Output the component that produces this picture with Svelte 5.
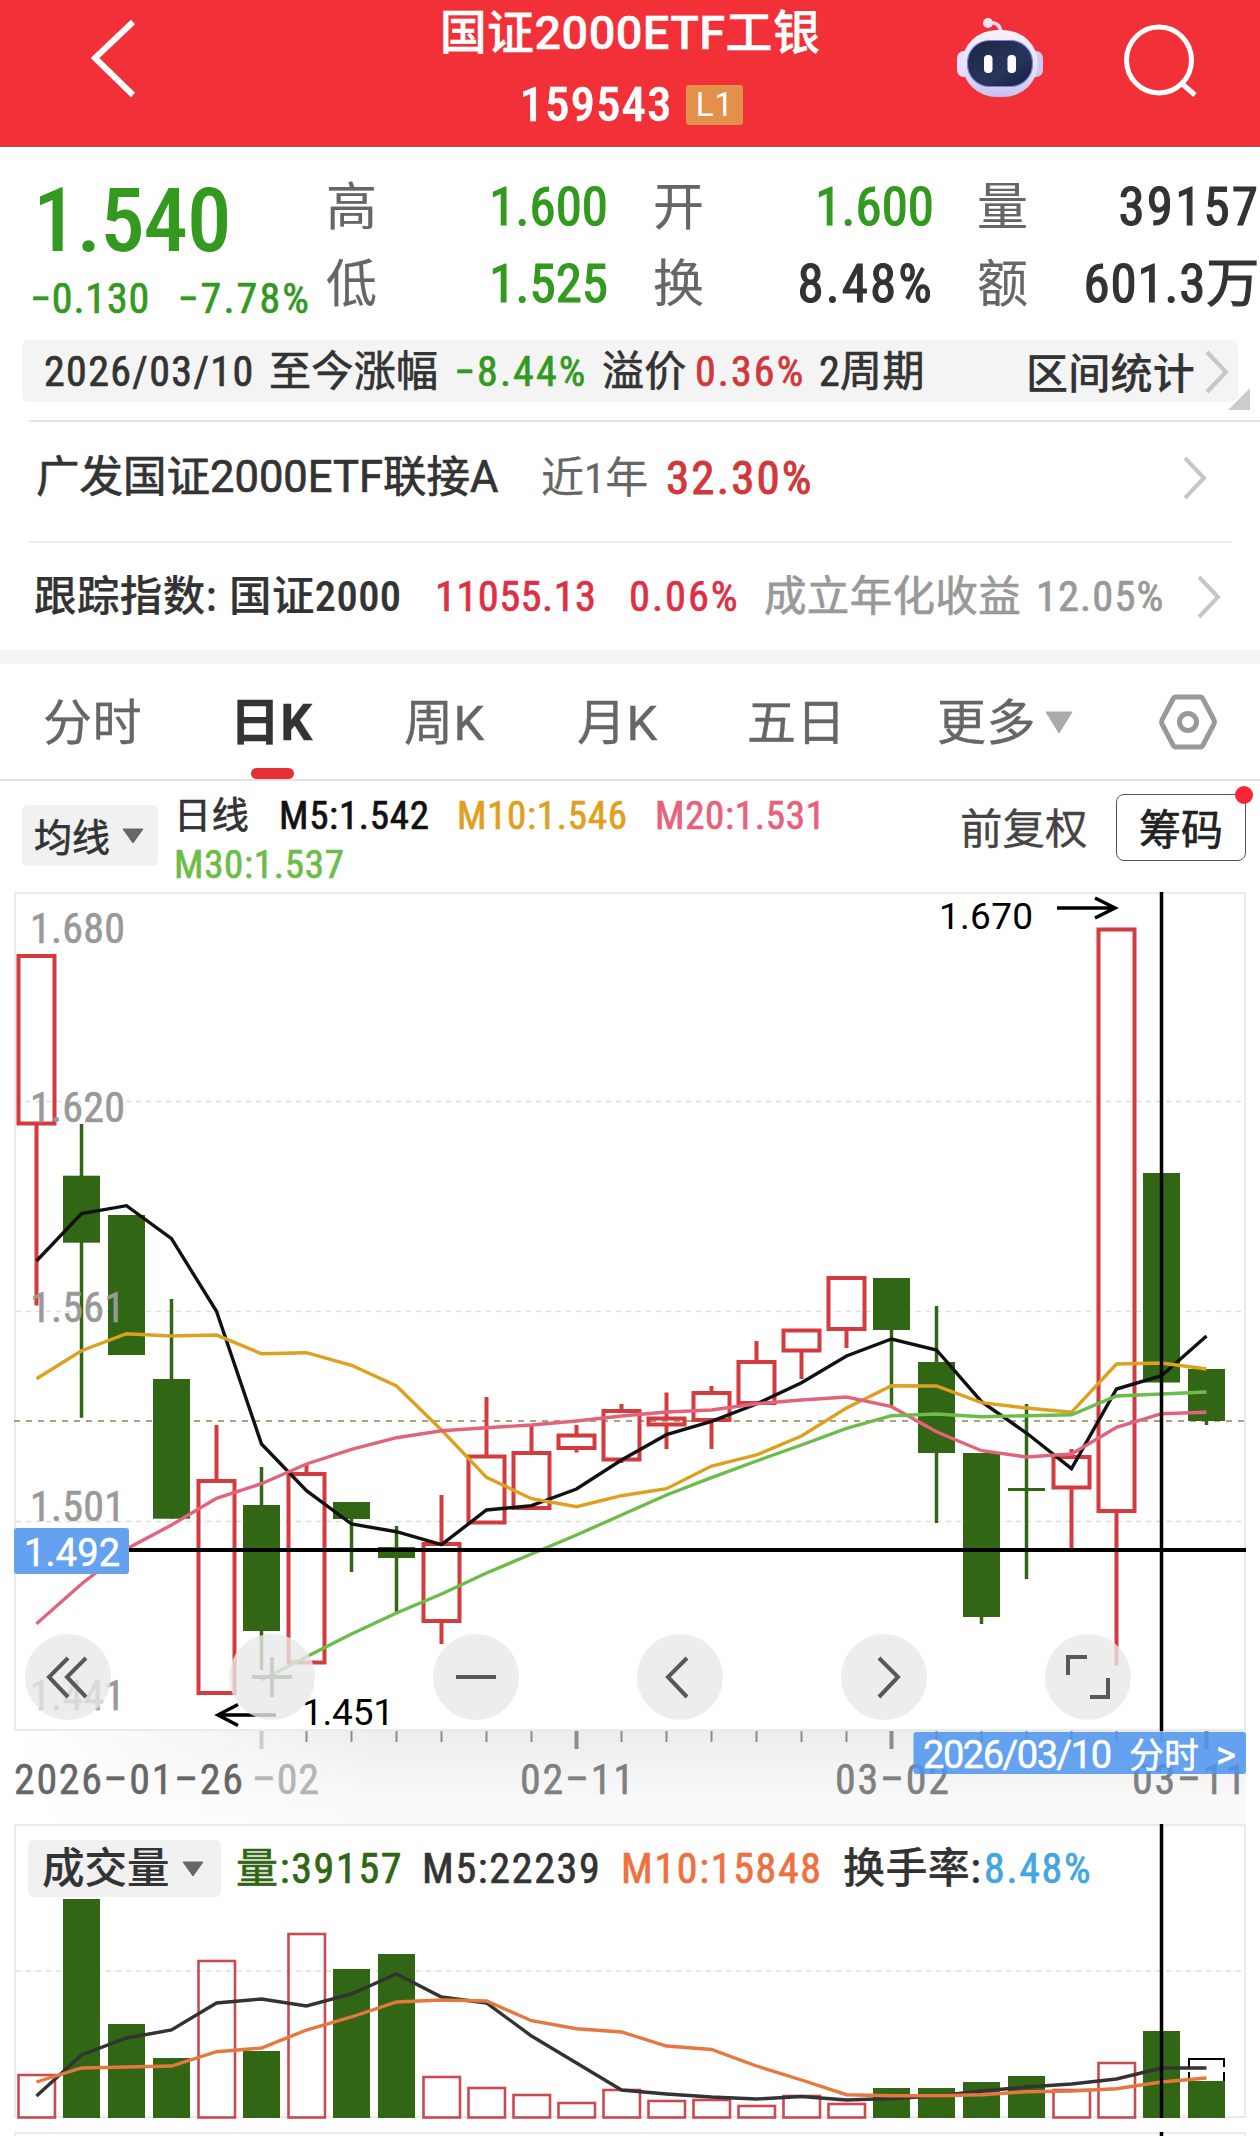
<script lang="ts">
    type Candle = { up?: boolean; high: number; top: number; bottom: number; low: number };

    const tabs = ['分时', '日K', '周K', '月K', '五日'];
    let activeTab = '日K';

    // candle geometry, in chart units (y grows downwards)
    const candles: Candle[] = [
        { up: true, high: 956, top: 956, bottom: 1123.5, low: 1305.5 },
        { high: 1124, top: 1175.7, bottom: 1242.7, low: 1417.7 },
        { high: 1215, top: 1215, bottom: 1355, low: 1355 },
        { high: 1299, top: 1379, bottom: 1518.7, low: 1518.7 },
        { up: true, high: 1425, top: 1481, bottom: 1693, low: 1693 },
        { high: 1467, top: 1505, bottom: 1631, low: 1670 },
        { up: true, high: 1465, top: 1474, bottom: 1662.5, low: 1662.5 },
        { high: 1502, top: 1502, bottom: 1519, low: 1572 },
        { high: 1526, top: 1547, bottom: 1558, low: 1612 },
        { up: true, high: 1495, top: 1544, bottom: 1621, low: 1644 },
        { up: true, high: 1397, top: 1456.5, bottom: 1522.5, low: 1522.5 },
        { up: true, high: 1424, top: 1453, bottom: 1508, low: 1508 },
        { up: true, high: 1425, top: 1435.5, bottom: 1448, low: 1452.5 },
        { up: true, high: 1404, top: 1411, bottom: 1459.5, low: 1463 },
        { up: true, high: 1392.5, top: 1418.5, bottom: 1424.5, low: 1449 },
        { up: true, high: 1386, top: 1393, bottom: 1420, low: 1449 },
        { up: true, high: 1341, top: 1362, bottom: 1403, low: 1403 },
        { up: true, high: 1330.5, top: 1330.5, bottom: 1350.5, low: 1379 },
        { up: true, high: 1278, top: 1278, bottom: 1329, low: 1348 },
        { high: 1278, top: 1278, bottom: 1330, low: 1406 },
        { high: 1306, top: 1362, bottom: 1453, low: 1523 },
        { high: 1453, top: 1453, bottom: 1617, low: 1624 },
        { high: 1404, top: 1488, bottom: 1491, low: 1579 },
        { up: true, high: 1449, top: 1457, bottom: 1487.5, low: 1548 },
        { up: true, high: 929.5, top: 929.5, bottom: 1511, low: 1665.5 },
        { high: 1173, top: 1173, bottom: 1382.5, low: 1382.5 },
        { high: 1369, top: 1369, bottom: 1421, low: 1425 }
    ];

    const m5 = [1261, 1213.7, 1205.7, 1238.7, 1311.3, 1444, 1490.7, 1524, 1531.7, 1544.7, 1510, 1505.7, 1489, 1460, 1434.7, 1421.3, 1404, 1382.7, 1356, 1339, 1350, 1401.7, 1433, 1468.7, 1389, 1375.7, 1336];
    const m10 = [1378.7, 1350.7, 1333.7, 1336, 1335, 1353.7, 1352.7, 1365.3, 1386, 1430, 1477.3, 1498.7, 1506.7, 1495.7, 1488.7, 1466, 1455, 1436, 1408, 1385.7, 1386, 1402.7, 1408, 1412.3, 1364, 1363, 1369];
    const m20 = [1623.7, 1584, 1549, 1525, 1498.3, 1483.7, 1464, 1449.3, 1437.7, 1430.7, 1427.7, 1425, 1421, 1416, 1412, 1410, 1403.7, 1400, 1397, 1406.7, 1431.7, 1450.7, 1457, 1454, 1427.3, 1413.7, 1412.3];
    const m30 = [1680, 1656.7, 1634, 1613, 1594, 1573, 1554, 1535, 1515, 1495, 1477.7, 1461, 1445, 1428.3, 1415.7, 1414, 1416.7, 1415.7, 1414.7, 1396, 1394, 1392];

    const volumes = [2075, 1899, 2024, 2058, 1961, 2051, 1934, 1969, 1954, 2077, 2088, 2095, 2103, 2090, 2101, 2100, 2106, 2096, 2104, 2088, 2088, 2082, 2076, 2090, 2063, 2031, 2081];
    const vm5 = [2096, 2055, 2038, 2030, 2003, 1999, 2006, 1994, 1974, 1997, 2003, 2036, 2063, 2090, 2094, 2097, 2099, 2096.5, 2100, 2098.5, 2096, 2091, 2087, 2084, 2079, 2068, 2068];
    const vm10 = [2082, 2068, 2067, 2066, 2051.7, 2048, 2030, 2017, 2002, 2000, 2001, 2020.7, 2028.7, 2032, 2046, 2049.5, 2066, 2080, 2094.7, 2095.7, 2095.7, 2094.7, 2091.7, 2091, 2088.7, 2082, 2078];

    const priceLabels = [
        { y: 943, text: '1.680' },
        { y: 1122, text: '1.620' },
        { y: 1322, text: '1.561' },
        { y: 1520.5, text: '1.501' },
        { y: 1710, text: '1.441' }
    ];

    const cx = (i: number) => 36.5 + i * 45;

    function line(values: number[], start = 0) {
        return values.map((y, i) => `${cx(i + start)},${y}`).join(' ');
    }
</script>

<div class="page">
    <header>
        <svg class="back" width="50" height="84" viewBox="0 0 50 84">
            <path d="M44 7 L6 43 L44 80" />
        </svg>
        <div class="title">
            <div class="name">国证2000ETF工银</div>
            <div class="code">159543<span class="badge">L1</span></div>
        </div>
        <div class="head-icons">
            <svg width="90" height="84" viewBox="955 15 90 84">
                <defs>
                    <linearGradient id="shell" x1="0" y1="0" x2="0" y2="1">
                        <stop offset="0" stop-color="#f6f1fb" />
                        <stop offset=".6" stop-color="#dfe3fb" />
                        <stop offset="1" stop-color="#c9bff0" />
                    </linearGradient>
                    <linearGradient id="visor" x1="0" y1="0" x2="1" y2="1">
                        <stop offset="0" stop-color="#1a2444" />
                        <stop offset=".6" stop-color="#29355c" />
                        <stop offset="1" stop-color="#161d40" />
                    </linearGradient>
                </defs>
                <path d="M988 23 Q1000 21 1001 33" fill="none" stroke="#f1dcec" stroke-width="3.5" />
                <circle cx="988" cy="23" r="5" fill="#f6e6f2" />
                <rect x="957" y="51" width="14" height="26" rx="7" fill="#e6e0fa" />
                <rect x="1029" y="51" width="14" height="26" rx="7" fill="#cdc8f5" />
                <rect x="962" y="30" width="76" height="67" rx="35" fill="url(#shell)" />
                <rect x="967.5" y="40.5" width="65" height="46" rx="22" fill="url(#visor)" stroke="#8a7ae0" stroke-width="1.2" />
                <rect x="984" y="55" width="8.5" height="18" rx="4" fill="#fff" />
                <rect x="1007.5" y="55" width="8.5" height="18" rx="4" fill="#fff" />
            </svg>
            <svg width="78" height="78" viewBox="1120 21 78 78">
                <ellipse cx="1159" cy="60" rx="32.5" ry="33" fill="none" stroke="#fff" stroke-width="5" />
                <path d="M1180 82 L1195 95" stroke="#fff" stroke-width="5" />
            </svg>
        </div>
    </header>

    <section class="quote green">
        <div class="price">
            <div class="last">1.540</div>
            <div class="change"><span>−0.130</span><span class="percent">−7.78%</span></div>
        </div>
        <div class="stats">
            <span class="label">高</span><span class="value">1.600</span>
            <span class="label">开</span><span class="value">1.600</span>
            <span class="label">量</span><span class="value dark">39157</span>
            <span class="label">低</span><span class="value">1.525</span>
            <span class="label">换</span><span class="value dark">8.48%</span>
            <span class="label">额</span><span class="value dark amount">601.3万</span>
        </div>
    </section>

    <section class="range">
        <span>2026/03/10</span>
        <span class="zh">至今涨幅</span>
        <span class="green">−8.44%</span>
        <span class="zh">溢价</span>
        <span class="red">0.36%</span>
        <span class="zh">2周期</span>
        <span class="range-stat">区间统计</span>
        <svg class="chevron" width="26" height="44" viewBox="0 0 26 44"><path d="M3 2 L22 22 L3 42" /></svg>
        <i class="corner"></i>
    </section>

    <section class="fund">
        <span class="fund-name">广发国证2000ETF联接A</span>
        <span class="gray">近1年</span>
        <span class="red fund-rate">32.30%</span>
        <svg class="chevron" width="26" height="44" viewBox="0 0 26 44"><path d="M3 2 L22 22 L3 42" /></svg>
    </section>

    <section class="index">
        <span class="medium">跟踪指数:</span>
        <span class="medium">国证2000</span>
        <span class="pink">11055.13</span>
        <span class="pink percent">0.06%</span>
        <span class="faint zh">成立年化收益</span>
        <span class="faint">12.05%</span>
        <svg class="chevron" width="26" height="44" viewBox="0 0 26 44"><path d="M3 2 L22 22 L3 42" /></svg>
    </section>

    <nav>
        {#each tabs as tab}
        <button class="tab {tab === activeTab ? "active" : ""}" on:click={() => {activeTab = tab}}>{tab}</button>
        {/each}
        <button class="tab more">更多<svg width="28" height="23" viewBox="0 0 28 23"><path d="M1 1 H27 L14 22 Z" fill="#aaa" stroke="#aaa" stroke-linejoin="round" /></svg></button>
        <svg class="gear" width="60" height="60" viewBox="0 0 60 60">
            <path d="M18 5 H42 Q44 5 45 7 L56 28 Q57 30 56 32 L45 53 Q44 55 42 55 H18 Q16 55 15 53 L4 32 Q3 30 4 28 L15 7 Q16 5 18 5 Z" />
            <circle cx="30" cy="30" r="8.5" />
        </svg>
    </nav>

    <section class="averages">
        <div class="chip">均线<svg width="22" height="16" viewBox="0 0 22 16"><path d="M1 1 H21 L11 15 Z" fill="#666" stroke="#666" stroke-linejoin="round" /></svg></div>
        <div class="ma-list">
            <span>日线</span>
            <span class="c5">M5:1.542</span>
            <span class="c10">M10:1.546</span>
            <span class="c20">M20:1.531</span>
            <span class="c30">M30:1.537</span>
        </div>
        <span class="adjust">前复权</span>
        <button class="chips-button">筹码<i class="dot"></i></button>
    </section>

    <section class="chart">
        <svg width="1260" height="1246" viewBox="0 890 1260 1246">
            <defs>
                <linearGradient id="shade" x1="0" y1="0" x2="0" y2="1">
                    <stop offset="0" stop-color="#ededed" />
                    <stop offset=".7" stop-color="#f9f9f9" />
                    <stop offset="1" stop-color="#fbfbfb" />
                </linearGradient>
                <linearGradient id="fade" x1="0" y1="0" x2="1" y2="0">
                    <stop offset="0" stop-color="#fff" />
                    <stop offset=".3" stop-color="#fff" stop-opacity="0" />
                </linearGradient>
            </defs>

            <!-- price frame and grid -->
            <rect x="15" y="893" width="1230" height="837" class="frame" />
            <rect x="15" y="1731" width="1231" height="98" fill="url(#shade)" />
            <rect x="14" y="1731" width="1232" height="98" fill="url(#fade)" />
            {#each [1101.5, 1311.5, 1521.5] as y}
            <line x1="16" x2="1244" y1={y} y2={y} class="grid" />
            {/each}
            <line x1="14" x2="1246" y1="1421" y2="1421" stroke="#ada27b" stroke-width="2" stroke-dasharray="6 6" />

            {#each candles as c, i}
            {#if c.up}
            <g class="up">
                <line x1={cx(i)} x2={cx(i)} y1={c.high} y2={c.top} />
                <line x1={cx(i)} x2={cx(i)} y1={c.bottom} y2={c.low} />
                <rect x={cx(i) - 18} y={c.top} width="36" height={c.bottom - c.top} />
            </g>
            {:else}
            <g class="down">
                <line x1={cx(i)} x2={cx(i)} y1={c.high} y2={c.low} />
                <rect x={cx(i) - 18.5} y={c.top} width="37" height={c.bottom - c.top} />
            </g>
            {/if}
            {/each}

            {#each priceLabels as label}
            <text x="30" y={label.y} textLength="95" class="axis">{label.text}</text>
            {/each}

            <g class="average">
                <polyline points={line(m5)} stroke="#111" />
                <polyline points={line(m10)} stroke="#dba11f" />
                <polyline points={line(m20)} stroke="#e2647c" />
                <polyline points={line(m30, 5)} stroke="#6cbc4a" />
            </g>

            <!-- high and low marks -->
            <text x="939" y="929" textLength="94" class="mark">1.670</text>
            <path d="M1057 908 H1114 M1095 898 L1115 908 L1095 918" class="arrow" />
            <text x="302" y="1725" textLength="92" class="mark">1.451</text>
            <path d="M276 1715 H220 M238 1704.5 L218 1715 L238 1725.5" class="arrow" />

            <!-- time axis -->
            {#each candles as _, i}
            {#if i >= 5}
            <line x1={cx(i)} x2={cx(i)} y1="1731" y2={(i - 5) % 7 === 0 ? 1749 : 1742} stroke={i === 5 ? '#ccc' : '#8c8c8c'} stroke-width={(i - 5) % 7 === 0 ? 4 : 2} />
            {/if}
            {/each}
            <text x="14" y="1794" textLength="229" class="date first">2026–01–26</text>
            <text x="252" y="1794" textLength="67" class="date dim">–02</text>
            <text x="520" y="1794" textLength="114" class="date">02–11</text>
            <text x="835" y="1794" textLength="114" class="date">03–02</text>
            <text x="1132" y="1794" textLength="114" class="date">03–11</text>

            <!-- volume -->
            <path d="M15 2136 V2133 H1245 V2136" class="frame" />
            <rect x="15" y="1825" width="1230" height="292" class="frame" />
            <line x1="16" x2="1244" y1="1971" y2="1971" class="grid" />
            {#each volumes as top, i}
            {#if candles[i].up}
            <rect x={cx(i) - 18} y={top} width="36.5" height={2117.5 - top} class="volume-up" />
            {:else}
            <rect x={cx(i) - 18.5} y={top} width="37" height={2118 - top} class="volume-down" />
            {/if}
            {/each}
            <path d="M1189 2067 V2059 H1224 V2067 M1189 2072 V2081 M1224 2072 V2081" fill="none" stroke="#000" stroke-width="2" />
            <g class="average">
                <polyline points={line(vm5)} stroke="#333" />
                <polyline points={line(vm10)} stroke="#e5773f" />
            </g>

            <!-- crosshair -->
            <path d="M15 1550 H1246" stroke="#000" stroke-width="4" />
            <path d="M1161.5 892 V1731 M1161.5 1824 V2118 M1161.5 2132 V2136" stroke="#000" stroke-width="3.5" />
            <rect x="14" y="1528" width="115" height="46" rx="3" fill="#64a2f0" />
            <text x="24" y="1565.5" textLength="96" class="tag">1.492</text>
            <rect x="913.5" y="1732" width="332.5" height="42" rx="3" fill="#4b93ee" fill-opacity=".85" />
            <text x="923" y="1768" textLength="189" class="tag">2026/03/10</text>
            <text x="1129" y="1768" textLength="70" class="tag cjk">分时</text>
            <text x="1216" y="1768" textLength="23" class="tag">&gt;</text>
        </svg>

        <div class="controls">
            <button><svg viewBox="0 0 86 86"><path d="M43 24 L24 43 L43 63 M61 24 L42 43 L61 63" /></svg></button>
            <button class="disabled"><svg viewBox="0 0 86 86"><path d="M23 43 H63 M43 23 V63" /></svg></button>
            <button><svg viewBox="0 0 86 86"><path d="M23 43 H63" /></svg></button>
            <button><svg viewBox="0 0 86 86"><path d="M50 24 L31 43 L50 63" /></svg></button>
            <button><svg viewBox="0 0 86 86"><path d="M38 24 L57 43 L38 63" /></svg></button>
            <button><svg viewBox="0 0 86 86"><path d="M42 23 H23 V41 M63 44 V63 H45" /></svg></button>
        </div>

        <div class="volume-head">
            <div class="chip volume-chip">成交量<svg width="22" height="16" viewBox="0 0 22 16"><path d="M1 1 H21 L11 15 Z" fill="#666" stroke="#666" stroke-linejoin="round" /></svg></div>
            <span class="v-now">量:39157</span>
            <span class="v-m5">M5:22239</span>
            <span class="v-m10">M10:15848</span>
            <span class="v-turn">换手率:</span>
            <span class="v-rate">8.48%</span>
        </div>
    </section>
</div>

<style>
    :global(body) {
        background: #fff;
    }

    .page {
        width: 1260px;
        height: 2136px;
        overflow: hidden;
        font-family: Roboto, 'Noto Sans CJK SC', sans-serif;
        font-stretch: 75%;
        font-weight: 400;
        -webkit-text-stroke: .7px;
        color: #333;
        white-space: nowrap;
    }

    button {
        font: inherit;
        letter-spacing: inherit;
        color: inherit;
        background: none;
        border: 0;
        padding: 0;
    }

    .green { color: #33991f; }
    .red { color: #d0383b; }
    .pink { color: #df2f45; }
    .gray { color: #666; -webkit-text-stroke: .2px; }
    .faint { color: #999; }

    .medium {
        font-weight: 500;
        -webkit-text-stroke: .2px;
    }

    header {
        height: 147px;
        display: grid;
        grid-template-columns: 300px 1fr 300px;
        background: #f23038;
        border-bottom: 1px solid #c9484c;
        box-sizing: border-box;
        color: #fff;
    }

    .back {
        margin: 15px 0 0 89px;
        fill: none;
        stroke: #fff;
        stroke-width: 6;
    }

    .title {
        text-align: center;
        font-weight: 500;
        -webkit-text-stroke: .4px;
    }

    .name {
        font-size: 47px;
        line-height: 66px;
        font-stretch: 100%;
        letter-spacing: .008em;
    }

    .code {
        display: flex;
        align-items: center;
        justify-content: center;
        gap: 14px;
        font-size: 49px;
        line-height: 77px;
        letter-spacing: .02em;
        padding-left: 3px;
    }

    .badge {
        width: 57px;
        height: 40px;
        background: #e3914a;
        border-radius: 3px;
        font-size: 33px;
        line-height: 40px;
        font-weight: 400;
        font-stretch: 100%;
        -webkit-text-stroke: 0;
    }

    .head-icons {
        display: flex;
        align-items: flex-start;
        gap: 75px;
        padding-top: 15px;
        margin-left: -5px;
    }

    .head-icons svg:last-child {
        margin-top: 6px;
    }

    .quote {
        height: 193px;
        display: flex;
    }

    .price {
        width: 325px;
        padding-left: 33px;
        box-sizing: border-box;
    }

    .last {
        font-size: 89px;
        line-height: 90px;
        margin-top: 29px;
        font-weight: 500;
        letter-spacing: -.012em;
        -webkit-text-stroke: 0;
    }

    .change {
        display: flex;
        font-size: 42px;
        line-height: 50px;
        margin: 8px 0 0 -3px;
        letter-spacing: .02em;
    }

    .change span {
        width: 149px;
    }

    .percent {
        letter-spacing: .03em;
    }

    .change .percent {
        letter-spacing: .05em;
    }

    .stats {
        display: grid;
        grid-template-columns: 52px 230px 45px 52px 229px 43px 52px 231px;
        grid-template-rows: 77px 77px;
        margin: 22px 0 0 1px;
        line-height: 77px;
        font-size: 53px;
    }

    .label {
        color: #666;
        font-size: 51px;
        -webkit-text-stroke: .2px;
    }

    .value {
        text-align: right;
        -webkit-text-stroke: 1.2px;
    }

    /* every pair after the first one leaves an empty gutter column */
    .label:nth-child(6n + 3) { grid-column: 4; }
    .label:nth-child(6n + 5) { grid-column: 7; }

    .dark {
        color: #333;
        letter-spacing: .04em;
    }

    .amount {
        letter-spacing: .015em;
    }

    .range {
        position: relative;
        display: grid;
        grid-template-columns: 225px 185px 148px 93px 124px 207px 178px 30px;
        align-items: center;
        height: 62px;
        margin: 0 22px;
        padding-left: 22px;
        background: #f4f4f4;
        border-radius: 7px;
        font-size: 42px;
        line-height: 64px;
        letter-spacing: .032em;
    }

    .zh {
        letter-spacing: .008em;
    }

    .range .red,
    .range .green {
        letter-spacing: .05em;
    }

    .range-stat {
        position: relative;
        top: 3px;
        font-weight: 500;
        letter-spacing: .005em;
        -webkit-text-stroke: .2px;
    }

    .corner {
        position: absolute;
        right: -12px;
        bottom: -8px;
        border-left: 22px solid transparent;
        border-bottom: 22px solid #ccc;
    }

    .chevron {
        fill: none;
        stroke: #c6c6c6;
        stroke-width: 4;
    }

    .fund {
        display: grid;
        grid-template-columns: 505px 125px 516px 30px;
        align-items: center;
        height: 121px;
        box-sizing: border-box;
        margin: 18px 0 0 29px;
        padding: 0 0 7px 7px;
        border-top: 2px solid #e3e3e3;
        font-size: 43px;
        line-height: 60px;
    }

    .fund-name {
        font-stretch: 100%;
        font-size: 43.5px;
    }

    .fund-rate {
        font-size: 47px;
        letter-spacing: .045em;
        -webkit-text-stroke: 1px;
    }

    .index {
        display: grid;
        grid-template-columns: 195px 206px 194px 135px 272px 160px 30px;
        align-items: center;
        height: 109px;
        box-sizing: border-box;
        margin: 0 28px 0 29px;
        padding-left: 5px;
        border-top: 2px solid #eee;
        font-size: 42.5px;
        line-height: 60px;
        letter-spacing: .01em;
    }

    .index .percent {
        letter-spacing: .045em;
    }

    .index .faint:not(.zh) {
        letter-spacing: .025em;
    }

    nav {
        display: flex;
        align-items: stretch;
        height: 131px;
        box-sizing: border-box;
        border-top: 14px solid #f4f4f4;
        border-bottom: 2px solid #e4e4e4;
        padding-left: 43px;
        font-size: 49px;
        color: #666;
    }

    .tab {
        position: relative;
        text-align: left;
        width: 173px;
        line-height: 119px;
        font-stretch: 100%;
        letter-spacing: .01em;
        -webkit-text-stroke: .4px;
    }

    .tab:first-child { width: 187px; }

    .active {
        width: 174px;
        color: #333;
        font-size: 50px;
        font-weight: 700;
    }

    .active::after {
        content: '';
        position: absolute;
        left: 21px;
        bottom: 0;
        width: 43px;
        height: 11px;
        border-radius: 6px;
        background: #e43034;
    }

    .tab:nth-child(4) { width: 170px; }
    .tab:nth-child(5) { width: 190px; }

    .more {
        width: 221px;
    }

    .more svg {
        margin: 0 0 6px 9px;
    }

    .gear {
        margin-top: 28px;
        fill: none;
        stroke: #999;
        stroke-width: 5;
    }

    .averages {
        display: flex;
        height: 109px;
        padding-left: 22px;
    }

    .chip {
        display: flex;
        align-items: center;
        gap: 12px;
        box-sizing: border-box;
        width: 136px;
        height: 61px;
        margin-top: 24px;
        padding: 0 0 3px 12px;
        background: #f1f1f1;
        border-radius: 6px;
        font-size: 38px;
    }

    .chip svg {
        margin-top: 3px;
    }

    .ma-list {
        display: grid;
        grid-template-columns: 105px 178px 198px 200px;
        grid-auto-rows: 49px;
        width: 784px;
        box-sizing: border-box;
        padding: 11px 0 0 16px;
        font-size: 39px;
        line-height: 49px;
        letter-spacing: .018em;
    }

    .ma-list span:first-child {
        font-size: 37px;
    }

    .c5 { color: #111; }
    .c10 { color: #e0a01e; }
    .c20 { color: #e8607a; }
    .c30 { color: #6cbc48; }

    .adjust {
        width: 156px;
        padding-left: 18px;
        font-size: 42.5px;
        line-height: 98px;
        color: #444;
        -webkit-text-stroke: .3px;
    }

    .chips-button {
        position: relative;
        width: 130px;
        height: 67px;
        margin-top: 13px;
        padding-bottom: 3px;
        border: 1.5px solid #555;
        border-radius: 8px;
        font-size: 42px;
        color: #222;
    }

    .dot {
        position: absolute;
        right: -8px;
        top: -9px;
        width: 18px;
        height: 18px;
        border-radius: 50%;
        background: #fb2536;
    }

    .chart {
        position: relative;
    }

    .chart svg {
        display: block;
    }

    .frame {
        fill: none;
        stroke: #ebebeb;
        stroke-width: 2;
    }

    .grid {
        stroke: #dedede;
        stroke-width: 1.5;
        stroke-dasharray: 5 5;
    }

    .up {
        fill: none;
        stroke: #d33b3e;
        stroke-width: 4;
    }

    .down {
        fill: #306614;
        stroke: none;
    }

    .down line {
        stroke: #306614;
        stroke-width: 3.5;
    }

    .volume-up {
        fill: none;
        stroke: #cb4a52;
        stroke-width: 2.6;
    }

    .volume-down {
        fill: #306614;
    }

    .average {
        fill: none;
        stroke-width: 3.4;
    }

    .axis {
        font-size: 42px;
        fill: #999;
        stroke: #999;
        stroke-width: .6px;
    }

    .mark {
        font-size: 37px;
        fill: #000;
        font-stretch: 100%;
    }

    .arrow {
        fill: none;
        stroke: #000;
        stroke-width: 3.5;
    }

    .date {
        font-size: 42px;
        fill: #808080;
        stroke: #808080;
        stroke-width: .5px;
    }

    .first { fill: #666; stroke: #666; }
    .dim { fill: #b5b5b5; stroke: #b5b5b5; }

    .tag {
        font-size: 38px;
        fill: #fff;
        stroke: #fff;
        stroke-width: .5px;
        font-stretch: 100%;
    }

    .cjk {
        font-size: 35px;
    }

    .controls {
        position: absolute;
        left: 25px;
        top: 744px;
        display: flex;
        gap: 118px;
    }

    .controls button {
        width: 86px;
        height: 86px;
        border-radius: 50%;
        background: rgba(232, 232, 232, .8);
    }

    .controls path {
        fill: none;
        stroke: #585858;
        stroke-width: 4;
    }

    .controls .disabled path {
        stroke: #ccc;
    }

    .volume-head {
        position: absolute;
        left: 28px;
        top: 948px;
        display: grid;
        grid-template-columns: 208px 186px 199px 222px 141px 120px;
        align-items: center;
        font-size: 42px;
        line-height: 61px;
        letter-spacing: .04em;
    }

    .volume-chip {
        width: 193px;
        height: 57px;
        margin: 0;
        padding: 0 0 0 14px;
        gap: 12px;
        font-size: 42.5px;
        font-weight: 500;
        letter-spacing: 0;
        -webkit-text-stroke: .2px;
    }

    .volume-chip svg {
        margin-top: 0;
    }

    .v-now { color: #306614; }
    .v-m10 { color: #ee7040; }
    .v-turn {
        font-weight: 500;
        letter-spacing: .01em;
        -webkit-text-stroke: .2px;
    }
    .v-rate { color: #42a6e2; }
</style>
